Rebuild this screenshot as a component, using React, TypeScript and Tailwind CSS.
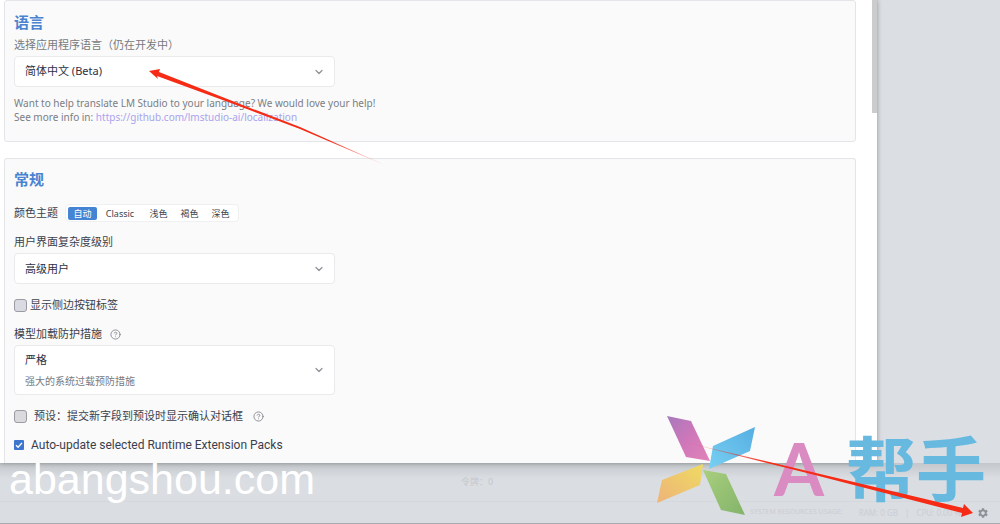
import { ChevronDown, CircleHelp } from "lucide-react";
import { MdSettings } from "react-icons/md";

const themes = ["自动", "Classic", "浅色", "褐色", "深色"];

const selectClass =
  "w-full appearance-none rounded-[4px] border border-[#e9eaec] bg-white pl-[10px] pr-8 text-[11px] text-[#2c3145] outline-none";

const Chevron = () => (
  <ChevronDown
    size={12}
    strokeWidth={2.5}
    className="pointer-events-none absolute right-[10px] top-1/2 -translate-y-1/2 text-[#8f9299]"
  />
);

const Language = () => (
  <section className="h-[142px] rounded-[3px] border border-[#e4e5e8] bg-[#fafafa] px-[9px] pt-[11px]">
    <h2 className="text-[15px] leading-[20px] font-bold text-[#4a83d0]">
      语言
    </h2>
    <label
      htmlFor="language"
      className="mt-[5px] block text-[11px] leading-[16px] text-[#777a80]"
    >
      选择应用程序语言（仍在开发中）
    </label>
    <div className="relative mt-[3px] w-[321px]">
      <select id="language" className={`${selectClass} h-[31px]`}>
        <option>简体中文 (Beta)</option>
      </select>
      <Chevron />
    </div>
    <p className="mt-[9px] text-[10px] leading-[14px] text-[#7b7e84]">
      Want to help translate LM Studio to your language? We would love your
      help!
      <br />
      See more info in:{" "}
      <a
        href="https://github.com/lmstudio-ai/localization"
        className="text-[#a9a3ee]"
      >
        https://github.com/lmstudio-ai/localization
      </a>
    </p>
  </section>
);

const General = () => (
  <section className="mt-[16px] flex-1 rounded-t-[3px] border border-b-0 border-[#e4e5e8] bg-[#fafafa] px-[9px] pt-[10px] pb-[10px] text-[11px] leading-[16px] text-[#3b3f4d]">
    <h2 className="text-[15px] leading-[20px] font-bold text-[#4a83d0]">
      常规
    </h2>
    <div className="mt-[15px] flex items-center gap-[7px]">
      <span>颜色主题</span>
      <div className="flex h-[18px] items-center rounded-[4px] border border-[#eff0f1] bg-white px-[2px] text-[9px]">
        {themes.map((theme, i) => (
          <button
            key={theme}
            type="button"
            aria-pressed={i === 0}
            className={
              i === 0
                ? "h-[13px] w-[29px] rounded-[2px] bg-[#4583d3] leading-[13px] text-white"
                : i === 1
                  ? "w-[46px] leading-[13px]"
                  : "w-[31px] leading-[13px]"
            }
          >
            {theme}
          </button>
        ))}
      </div>
    </div>
    <label htmlFor="complexity" className="mt-[12px] block">
      用户界面复杂度级别
    </label>
    <div className="relative mt-[3px] w-[321px]">
      <select id="complexity" className={`${selectClass} h-[31px]`}>
        <option>高级用户</option>
      </select>
      <Chevron />
    </div>
    <label className="mt-[13px] flex items-center gap-[3px]">
      <input
        type="checkbox"
        className="size-[13px] appearance-none rounded-[3px] border border-[#9b9ba3] bg-[#dadae2]"
      />
      显示侧边按钮标签
    </label>
    <div className="mt-[13px] flex items-center gap-[8px]">
      <label htmlFor="guardrails">模型加载防护措施</label>
      <CircleHelp size={11} strokeWidth={1.8} className="text-[#7d8088]" />
    </div>
    <div className="relative mt-[3px] w-[321px]">
      <select id="guardrails" className={`${selectClass} h-[50px] pb-[20px]`}>
        <option>严格</option>
      </select>
      <span className="pointer-events-none absolute bottom-[6px] left-[11px] text-[10px] text-[#777a80]">
        强大的系统过载预防措施
      </span>
      <Chevron />
    </div>
    <label className="mt-[13px] flex items-center gap-[7px]">
      <input
        type="checkbox"
        className="size-[13px] appearance-none rounded-[3px] border border-[#9b9ba3] bg-[#dadadd]"
      />
      预设：提交新字段到预设时显示确认对话框
      <CircleHelp
        size={11}
        strokeWidth={1.8}
        className="ml-[3px] text-[#7d8088]"
      />
    </label>
    <label className="mt-[13px] flex items-center gap-[7px] font-['Roboto',sans-serif] text-[12px]">
      <span className="relative flex">
        <input
          type="checkbox"
          defaultChecked
          className="size-[10px] appearance-none rounded-[1px] bg-[#3c76cf]"
        />
        <svg
          viewBox="0 0 10 10"
          className="pointer-events-none absolute inset-0 size-[10px]"
        >
          <path
            d="M2 5.2 4.1 7.2 8 2.9"
            fill="none"
            stroke="#fff"
            strokeWidth="1.4"
          />
        </svg>
      </span>
      Auto-update selected Runtime Extension Packs
    </label>
  </section>
);

const StatusBar = () => (
  <footer className="flex h-[61px] flex-col border-b border-[#a7aaae] bg-linear-to-b from-[#c3c7cb] from-0% via-[#dadde2] via-25% to-[#dadde2]">
    <div className="flex h-[38px] items-center pl-[461px] text-[9px] text-[#c5c8cd]">
      <span>令牌：0</span>
    </div>
    <div className="flex flex-1 items-center justify-end gap-[16px] border-t border-[#d4d7dc] pr-[11px] text-[7px] text-[#cbced3]">
      <span>SYSTEM RESOURCES USAGE:</span>
      <span className="flex gap-[7px] text-[8px]">
        <span>RAM: 0 GB</span>
        <span>|</span>
        <span>CPU: 0.00 %</span>
      </span>
      <button type="button" aria-label="设置" className="text-[#8d9299]">
        <MdSettings size={12} />
      </button>
    </div>
  </footer>
);

const Logo = () => (
  <div className="pointer-events-none absolute right-[11px] bottom-[8px] flex h-[102px] w-[332px] items-start">
    <svg viewBox="0 0 100 102" className="h-[102px] w-[100px] shrink-0">
      <defs>
        <linearGradient id="pink" x1="0" y1="0" x2="1" y2="1">
          <stop offset="0" stopColor="#a779bd" />
          <stop offset="0.5" stopColor="#cf77b9" />
          <stop offset="1" stopColor="#e283b9" />
        </linearGradient>
        <linearGradient id="yellow" x1="1" y1="0" x2="0" y2="1">
          <stop offset="0" stopColor="#eedb62" />
          <stop offset="1" stopColor="#eeb379" />
        </linearGradient>
        <linearGradient id="blue" x1="1" y1="0" x2="0" y2="1">
          <stop offset="0" stopColor="#55aee2" />
          <stop offset="1" stopColor="#78d0f2" />
        </linearGradient>
        <linearGradient id="green" x1="0" y1="0" x2="1" y2="1">
          <stop offset="0" stopColor="#a8cf7d" />
          <stop offset="1" stopColor="#83b36a" />
        </linearGradient>
      </defs>
      <path d="M10 2 34 7 53 47 29 43Z" fill="url(#pink)" />
      <path d="M56 32 98 13 93 37 52 55Z" fill="url(#blue)" />
      <path d="M46 50 43 71 0 89 5 66Z" fill="url(#yellow)" />
      <path d="M46 56 69 60 88 101 64 96Z" fill="url(#green)" />
    </svg>
    <span className="ml-[17px] pt-[17px] font-['Lato','Noto_Sans',sans-serif] text-[72px] leading-[74px] font-bold text-[#d98bc2]">
      A
    </span>
    <span className="ml-[22px] pt-[14px] font-['Noto_Sans_CJK_SC',sans-serif] text-[70px] leading-[76px] font-bold whitespace-nowrap text-[#68b9df]">
      帮手
    </span>
  </div>
);

const Arrows = () => (
  <>
    <svg
      viewBox="0 0 240 100"
      className="pointer-events-none absolute top-[68px] left-[149px] h-[100px] w-[240px]"
    >
      <defs>
        <linearGradient id="tailLeft" x1="0" y1="0" x2="1" y2="0">
          <stop offset="0.75" stopColor="#f52b16" />
          <stop offset="1" stopColor="#f52b16" stopOpacity="0.15" />
        </linearGradient>
      </defs>
      <path
        d="M0 3 11 1 10 4 91 36 151 59 238 98 151 61 90 38 8 8 9 11Z"
        fill="url(#tailLeft)"
      />
    </svg>
    <svg
      viewBox="0 0 290 76"
      className="pointer-events-none absolute right-[26px] bottom-[6px] h-[76px] w-[290px]"
    >
      <defs>
        <linearGradient id="tailRight" x1="0" y1="0" x2="1" y2="0">
          <stop offset="0" stopColor="#f52b16" stopOpacity="0.1" />
          <stop offset="0.3" stopColor="#f52b16" />
        </linearGradient>
      </defs>
      <path
        d="M0 0 132 31 279 66 280 62 289 71 277 75 278 71 131 33Z"
        fill="url(#tailRight)"
      />
    </svg>
  </>
);

const App = () => {
  return (
    <div className="relative flex min-h-screen flex-col overflow-hidden bg-[#dbdee3] font-['Noto_Sans','Noto_Sans_CJK_SC',sans-serif]">
      <div className="flex flex-1">
        <main className="relative z-10 mr-[123px] flex flex-1 flex-col bg-white pl-[4px] shadow-[0_0_5px_rgba(0,0,0,0.35)]">
          <div className="mr-[21px] flex flex-1 flex-col">
            <Language />
            <General />
          </div>
          <div className="absolute top-0 right-0 h-[113px] w-[5px] bg-[#cccccc]" />
        </main>
      </div>
      <StatusBar />
      <div className="pointer-events-none absolute inset-0 z-20">
        <span className="absolute bottom-[21px] left-[9px] font-['Liberation_Sans',sans-serif] text-[43px] leading-[48px] text-white">
          abangshou.com
        </span>
        <Logo />
        <Arrows />
      </div>
    </div>
  );
};

export default App;
